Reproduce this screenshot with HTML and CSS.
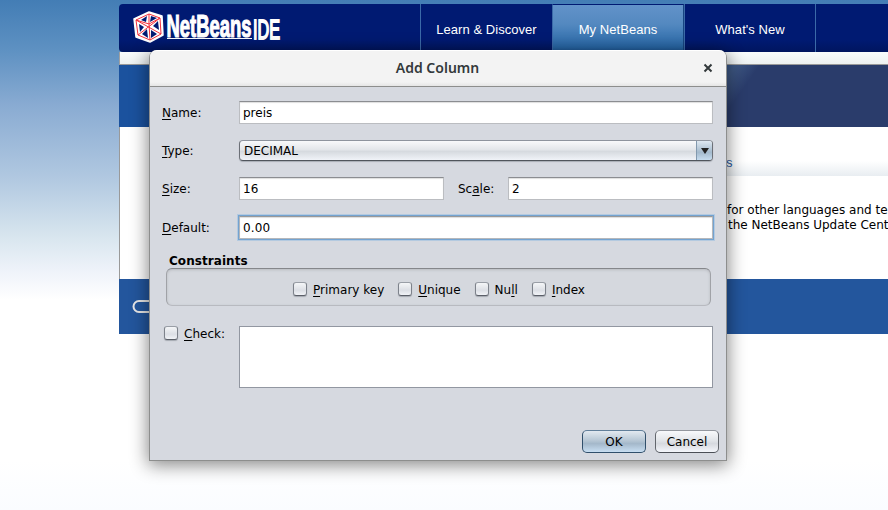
FILE: index.html
```html
<!DOCTYPE html>
<html lang="en">
<head>
<meta charset="utf-8">
<title>Add Column</title>
<link rel="stylesheet" href="styles.css">
</head>
<body>
<main class="ide">
  <nav class="nav">
    <div class="brand">
      <svg class="logo" width="160" height="42" viewBox="0 0 160 42">
        <path class="cube-bg" d="M16 2 29 6 30 25 17 32 3 27 1 9Z"/>
        <path class="cube-hole" d="M6 14 11 17 7 22ZM25 11 26 20 20 16ZM9 24 14 19 15 28ZM18 20 24 24 18 28ZM8 10 14 6 13 12ZM18 6 24 8 17 12Z"/>
        <path class="cube-line" d="M16 4 27 8 28 24 17 30 5 25 3 10ZM3 10 16 14 27 8M16 14 17 30M3 10 28 24M27 8 5 25M16 4V14"/>
        <text class="logo-bold" transform="translate(33.5 26.5) scale(.594 1)">NetBeans</text>
        <path class="logo-rule" d="M34 28.5H119"/>
        <text class="logo-ide" transform="translate(120 28.5) scale(.6 1)">IDE</text>
      </svg>
    </div>
    <a class="tab">Learn &amp; Discover</a>
    <a class="tab active">My NetBeans</a>
    <a class="tab">What's New</a>
    <div class="rest"></div>
  </nav>
  <div class="strip"></div>
  <div class="banner"></div>
  <section class="content">
    <div class="section-title">s</div>
    <p class="note">for other languages and te<br><span>the NetBeans Update Cent</span></p>
  </section>
  <footer class="footer"><svg width="40" height="16" viewBox="0 0 40 16"><rect class="oracle" x="1.5" y="2" width="24" height="11" rx="5.5"/></svg></footer>
</main>

<form class="dialog">
  <header class="titlebar">
    <h1>Add Column</h1>
    <svg class="close" width="10" height="10" viewBox="0 0 10 10"><path d="M1.5 1.5 8.5 8.5M8.5 1.5 1.5 8.5"/></svg>
  </header>
  <div class="body">
    <div class="row"><label><u>N</u>ame:</label><div class="field">preis</div></div>
    <div class="row type"><label><u>T</u>ype:</label><div class="combo"><span>DECIMAL</span><b><svg width="8" height="6" viewBox="0 0 8 6"><path d="M0 0H8L4 6Z"/></svg></b></div></div>
    <div class="row size"><label><u>S</u>ize:</label><div class="field">16</div><label class="scale">Sc<u>a</u>le:</label><div class="field">2</div></div>
    <div class="row default"><label><u>D</u>efault:</label><div class="field focus">0.00</div></div>
    <h2>Constraints</h2>
    <div class="group">
      <label class="check"><i></i><span><u>P</u>rimary key</span></label>
      <label class="check"><i></i><span><u>U</u>nique</span></label>
      <label class="check"><i></i><span>Nu<u>l</u>l</span></label>
      <label class="check"><i></i><span><u>I</u>ndex</span></label>
    </div>
    <div class="check-row"><label class="check"><i></i><span><u>C</u>heck:</span></label><div class="area"></div></div>
    <div class="actions"><div class="btn primary">OK</div><div class="btn">Cancel</div></div>
  </div>
</form>
</body>
</html>
```
FILE: styles.css
```css
* { box-sizing: border-box; }
body {
  margin: 0;
  width: 888px;
  height: 510px;
  overflow: hidden;
  position: relative;
  font: 12px/15px "DejaVu Sans", sans-serif;
  color: #000;
  background: linear-gradient(#437db5 0, #5e91c2 50px, #89abd2 105px, #b2c9e1 180px, #d7e5ee 235px, #eff3fa 272px, #fff 300px, #fff 460px, #fafcff 510px);
}
.ide { margin-left: 119px; padding-top: 4px; }
.nav {
  display: flex;
  height: 48px;
  border-radius: 4px 0 0 4px;
  background: linear-gradient(#001a72 0, #001a72 36px, #00155f 48px);
}
.brand { width: 301px; padding: 6px 0 0 14px; }
.logo { display: block; overflow: visible; }
.cube-bg { fill: #fff; stroke: #fff; stroke-width: 1.5; stroke-linejoin: round; }
.cube-line { fill: none; stroke: #f3303b; stroke-width: 1; }
.cube-hole { fill: #001a72; }
.logo-bold { font: bold 31px "Liberation Sans", sans-serif; fill: #fff; stroke: #fff; stroke-width: 1.2; }
.logo-ide { font: 27px "Liberation Sans", sans-serif; fill: #fff; stroke: #fff; stroke-width: 1.8; }
.logo-rule { stroke: #fff; stroke-width: 1; }
.tab {
  width: 132px;
  border-left: 1px solid #3b6aa8;
  color: #fff;
  font: 13px/51px "Liberation Sans", sans-serif;
  letter-spacing: .05px;
  text-align: center;
}
.tab.active {
  background: linear-gradient(#6292c9, #5489c0 40%, #2868a8 90%, #1e5695);
  border-top: 1px solid #001a72;
  border-right: 1px solid #174582;
  line-height: 49px;
}
.rest { flex: 1; border-left: 1px solid #3b6aa8; }
.tab:nth-of-type(3) { width: 131px; }
.strip {
  height: 13px;
  border-left: 1px solid #a0a0a0;
  border-bottom: 1px solid #999;
  background: linear-gradient(#f9fcfc, #edf1f1);
}
.banner { height: 62px; background: linear-gradient(125deg, #1b529e 0 470px, #3f5985 505px, #2a3c6b 525px); }
.content {
  height: 152px;
  border-left: 1px solid #999;
  background: #fff;
}
.section-title {
  height: 49px;
  margin-left: 100px;
  padding: 27px 0 0 506px;
  color: #2858a0;
  font: 13px/17px "Liberation Sans", sans-serif;
  background: linear-gradient(#fff 34px, #e8edf1);
}
.note { margin: 27px 0 0 607px; white-space: nowrap; }
.note span { margin-left: 1px; }
.footer { height: 55px; padding: 20px 0 0 13px; background: #23569d; }
.oracle { fill: none; stroke: #e8e8e8; stroke-width: 2; }

.dialog {
  position: absolute;
  left: 149px;
  top: 50px;
  width: 578px;
  height: 411px;
  border: 1px solid #8d8e8d;
  border-top: 0;
  border-radius: 8px 8px 0 0;
  background: #d6d9e0;
  box-shadow: 0 3px 18px 1px rgba(0,0,0,.48);
}
.titlebar {
  display: flex;
  align-items: center;
  height: 37px;
  padding: 0 13px 0 22px;
  border-top: 1px solid #fff;
  border-bottom: 1px solid #8d8e8d;
  border-radius: 7px 7px 0 0;
  background: linear-gradient(#f3f3f3 31px, #e5e5e5);
}
h1 {
  flex: 1;
  margin: -2px 0 0;
  text-align: center;
  color: #33393b;
  font: 600 14px/20px "Noto Sans", "Open Sans", sans-serif;
}
.close { margin-top: -1px; fill: none; stroke: #33393b; stroke-width: 2; }
.body { padding: 14px 13px 0 12px; }
u { text-decoration: underline; text-decoration-thickness: 1px; text-underline-offset: 2px; }
.row { display: flex; align-items: center; height: 23px; }
.row label { width: 77px; padding-top: 2px; }
.field {
  flex: 1;
  height: 23px;
  padding: 4px 3px;
  border: 1px solid #bbbdc1;
  border-top-color: #8b8d91;
  background: #fff;
  box-shadow: inset 0 1px 1px #dedede;
}
.focus { letter-spacing: .15px; border-color: #b5b7bb; border-top-color: #999; box-shadow: 0 0 0 1px #73a3d1, 0 0 0 2px #b4cae0, inset 0 1px 1px #ddd; }
.type { height: 21px; margin-top: 16px; }
.type label { padding-top: 1px; }
.combo {
  flex: 1;
  display: flex;
  height: 21px;
  border: 1px solid #6c7077;
  border-top-color: #8e949e;
  border-bottom-color: #50555c;
  border-radius: 4px;
  overflow: hidden;
  background: linear-gradient(#f8f9fb, #e3e6ea 45%, #d6dadf 55%, #f0f3f8);
  box-shadow: 0 1px 1px #a9adb5;
}
.combo span { flex: 1; padding: 3px 4px; }
.combo b {
  width: 16px;
  padding-left: 4px;
  border-left: 1px solid #8299ae;
  background: linear-gradient(#dee8f1, #adc1d2 50%, #a4bacd 60%, #c6dcef);
}
.combo svg { display: block; margin-top: 7px; fill: #222; }
.size { margin-top: 16px; }
.row .scale { width: 64px; padding-left: 14px; }
.default { margin-top: 16px; }
h2 { margin: 15px 0 0 7px; font: bold 12px/14px "DejaVu Sans", sans-serif; letter-spacing: .06px; }
.group {
  display: flex;
  justify-content: center;
  gap: 14px;
  width: 545px;
  height: 38px;
  margin-left: 4px;
  padding: 13px 0 0 1px;
  border: 1px solid #a0a2a7;
  border-top-color: #85878b;
  border-bottom-color: #b8bac0;
  border-radius: 6px;
  background: #d5d8de;
  box-shadow: inset 0 1px 3px #b8bbc0;
}
.check { display: flex; height: 16px; gap: 6px; white-space: nowrap; }
.check span { padding-top: 1px; }
.check i {
  width: 14px;
  height: 14px;
  border: 1px solid #7d828b;
  border-top-color: #999ea6;
  border-bottom-color: #5b5f68;
  border-radius: 3px;
  background: linear-gradient(#f5f6f8, #dcdfe5 60%, #f1f3f7);
  box-shadow: 0 1px 1px #a5a9b1;
}
.check-row { display: flex; justify-content: space-between; margin-top: 20px; padding-left: 2px; }
.area { width: 474px; height: 62px; border: 1px solid #9297a1; background: #fff; }
.actions { display: flex; justify-content: flex-end; gap: 9px; margin: 42px -6px 0 0; }
.btn {
  width: 64px;
  height: 23px;
  border: 1px solid #62666c;
  border-top-color: #93979e;
  border-bottom-color: #4b4f56;
  border-radius: 5px;
  text-align: center;
  line-height: 22px;
  background: linear-gradient(#f8f9fb, #e2e5e9 45%, #d6d9df 60%, #f4f6fb);
}
.primary {
  border-color: #304f6b;
  border-top-color: #617f9a;
  background: linear-gradient(#e2e9f0, #b7c7d5 45%, #a4b8ca 60%, #c8def2);
}
```
